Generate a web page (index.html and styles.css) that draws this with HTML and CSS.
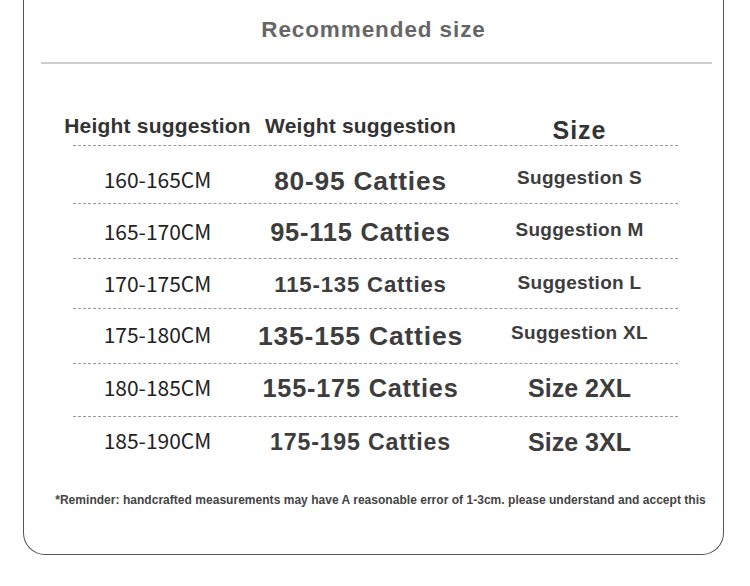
FILE: index.html
```html
<!DOCTYPE html>
<html lang="en">
<head>
<meta charset="utf-8">
<title>Recommended size</title>
<link rel="stylesheet" href="styles.css">
</head>
<body>
<div class="card">
  <h1 class="title">Recommended size</h1>
  <div class="divider"></div>
  <div class="table">
    <div class="row head">
      <div class="cell h-cell">Height suggestion</div>
      <div class="cell h-cell">Weight suggestion</div>
      <div class="cell h-size">Size</div>
    </div>
    <div class="row r1">
      <div class="cell height">160-165CM</div>
      <div class="cell weight w1">80-95 Catties</div>
      <div class="cell size sg">Suggestion S</div>
    </div>
    <div class="row r2">
      <div class="cell height">165-170CM</div>
      <div class="cell weight w2">95-115 Catties</div>
      <div class="cell size sg">Suggestion M</div>
    </div>
    <div class="row r3">
      <div class="cell height">170-175CM</div>
      <div class="cell weight w3">115-135 Catties</div>
      <div class="cell size sg">Suggestion L</div>
    </div>
    <div class="row r4">
      <div class="cell height">175-180CM</div>
      <div class="cell weight w4">135-155 Catties</div>
      <div class="cell size sg">Suggestion XL</div>
    </div>
    <div class="row r5">
      <div class="cell height">180-185CM</div>
      <div class="cell weight w5">155-175 Catties</div>
      <div class="cell size sz">Size 2XL</div>
    </div>
    <div class="row r6 last">
      <div class="cell height">185-190CM</div>
      <div class="cell weight w6">175-195 Catties</div>
      <div class="cell size sz">Size 3XL</div>
    </div>
  </div>
  <p class="note">*Reminder: handcrafted measurements may have A reasonable error of 1-3cm. please understand and accept this</p>
</div>
</body>
</html>
```

FILE: styles.css
```css
html, body {
  margin: 0;
  padding: 0;
  background: #ffffff;
}

body {
  font-family: "Liberation Sans", Arial, sans-serif;
  color: #333333;
}

.card {
  box-sizing: border-box;
  width: 701px;
  height: 555px;
  margin-left: 23px;
  border: 1.5px solid #555555;
  border-top: none;
  border-radius: 0 0 22px 22px;
}

.title {
  margin: 0;
  padding-top: 19px;
  font-size: 22.5px;
  line-height: 22px;
  font-weight: bold;
  letter-spacing: 0.9px;
  text-align: center;
  color: #666666;
}

.divider {
  height: 2px;
  margin: 21px 11px 0 17px;
  background: #cfcfcf;
}

.table {
  width: 605px;
  margin-left: 48.5px;
}

.row {
  display: grid;
  grid-template-columns: 170px 236px 199px;
  align-items: center;
  box-sizing: border-box;
  border-bottom: 1px dashed #9a9a9a;
}

.row.last {
  border-bottom: none;
}

.cell {
  display: flex;
  justify-content: center;
  white-space: nowrap;
  line-height: 1;
}

.cell:nth-child(3) {
  padding-left: 3px;
}

.head {
  height: 82px;
  align-items: end;
  padding-bottom: 3px;
}

.h-cell {
  font-size: 21px;
  font-weight: bold;
  letter-spacing: 0.2px;
  color: #333333;
  margin-bottom: 6px;
}

.h-size {
  font-size: 25px;
  font-weight: bold;
  letter-spacing: 1px;
  color: #333333;
  margin-bottom: -1px;
}

.r1 { height: 58px; padding-top: 10px; }
.r2 { height: 55px; padding-top: 1px; }
.r3 { height: 50px; padding-top: 1px; }
.r4 { height: 55px; padding-bottom: 3px; }
.r5 { height: 53px; padding-bottom: 5px; }
.r6 { height: 53px; padding-bottom: 5px; }

.height {
  font-family: "Noto Sans CJK SC", "Noto Sans", sans-serif;
  font-size: 21px;
  color: #222222;
  margin-bottom: 1px;
}

.weight {
  font-weight: bold;
  color: #3d3d3d;
  letter-spacing: 0.8px;
  margin-top: 3px;
}

.w1 { font-size: 26.3px; }
.w2 { font-size: 25.4px; }
.w3 { font-size: 22.2px; }
.w4 { font-size: 26.5px; }
.w5 { font-size: 25.3px; }
.w6 { font-size: 23.2px; }

.size {
  font-weight: bold;
  color: #3d3d3d;
}

.sg {
  font-size: 19px;
  letter-spacing: 0.3px;
  margin-bottom: 4px;
}

.sz {
  font-size: 25px;
  margin-top: 2px;
}

.note {
  margin: 24px 0 0 0;
  padding-left: 14px;
  font-size: 12px;
  line-height: 12px;
  font-weight: bold;
  letter-spacing: 0.03px;
  color: #444444;
  text-align: center;
  white-space: nowrap;
}
```
